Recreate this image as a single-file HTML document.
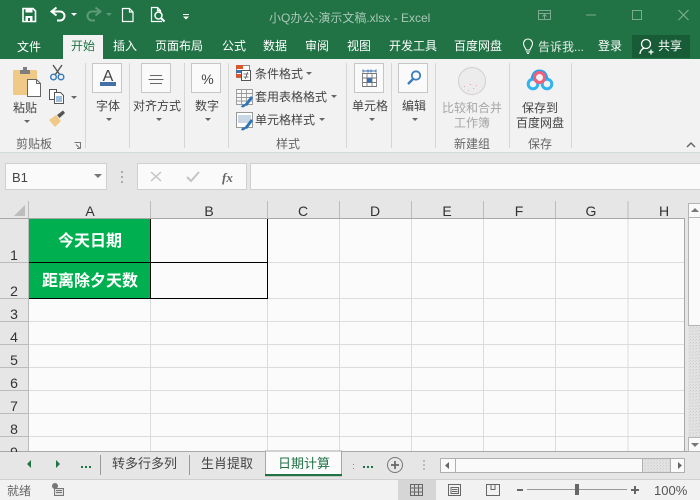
<!DOCTYPE html>
<html><head><meta charset="utf-8"><style>
html,body{margin:0;padding:0;width:700px;height:500px;overflow:hidden;background:#f2f2f2}
svg{display:block}
text{font-family:"Liberation Sans","Noto Sans CJK SC",sans-serif;font-size:12px;fill:#444}
.tab{fill:#fff}
.m{text-anchor:middle}
.g{fill:#666}
.d{fill:#a6a6a6}
.hd{font-size:14px;fill:#333;text-anchor:middle}
.rw{font-size:14px;fill:#333;text-anchor:middle}
</style></head><body>
<svg width="700" height="500" viewBox="0 0 700 500" xmlns="http://www.w3.org/2000/svg">
<defs>
<pattern id="h" width="3" height="3" patternUnits="userSpaceOnUse"><rect width="3" height="3" fill="#e2e2e2"/><rect width="1" height="1" fill="#cfcfcf"/><rect x="2" y="1" width="1" height="1" fill="#d4d4d4"/></pattern>
</defs>
<!-- title bar -->
<rect width="700" height="59" fill="#217346"/>
<path d="M23 8.500h10l2.500 2.500v10.500h-12.500z" fill="none" stroke="#fff" stroke-width="1.600"/>
<rect x="25.500" y="8" width="7" height="4.500" fill="#fff"/>
<rect x="25.500" y="16" width="7" height="5.500" fill="#fff"/><rect x="28" y="18" width="2" height="3" fill="#217346"/>
<path d="M52 11.500h8a4.500 4.500 0 0 1 0 9h-3" fill="none" stroke="#fff" stroke-width="2"/>
<path d="M56.500 7.500l-5 4 5 4" fill="none" stroke="#fff" stroke-width="2"/>
<path d="M71 13h6l-3 3z" fill="#fff"/>
<path d="M100 11.500h-8a4.500 4.500 0 0 0 0 9h3" fill="none" stroke="#5c9a78" stroke-width="2"/>
<path d="M95.500 7.500l5 4-5 4" fill="none" stroke="#5c9a78" stroke-width="2"/>
<path d="M106 13h6l-3 3z" fill="#5c9a78"/>
<path d="M122.500 8.500h7l3.500 3.500v9.500h-10.500zM129.500 8.500v3.500h3.500" fill="none" stroke="#fff" stroke-width="1.200"/>
<path d="M162 21.500h-10.500v-14h6l3 3v3M157.500 7.500v3h3" fill="none" stroke="#fff" stroke-width="1.200"/>
<circle cx="158.500" cy="15.500" r="3.500" fill="none" stroke="#fff" stroke-width="1.500"/>
<path d="M161 18l3.500 3.500" stroke="#fff" stroke-width="2"/>
<path d="M183 14h6v1h-6zM183 16.500h6l-3 3z" fill="#fff"/>
<text x="269" y="22" style="fill:#a9c8b6">小Q办公-演示文稿.xlsx - Excel</text>
<g fill="none" stroke="#7dab91" stroke-width="1">
<path d="M538.500 10.500h12v9h-12zM538.500 13.500h12M544.500 19v-4M542.500 16.500l2-2 2 2"/>
<path d="M586 15h10M632.500 10.500h9v9h-9z"/>
<path d="M678.500 10l10 10M688.500 10l-10 10" stroke-width="1.200"/>
</g>
<!-- tabs -->
<rect x="63" y="35" width="40" height="24" fill="#f2f2f2"/>
<rect x="632" y="35" width="58" height="23" fill="#185c37"/>
<text x="17" y="51" class="tab">文件</text>
<text x="71" y="50" style="fill:#217346">开始</text>
<text x="113" y="50" class="tab">插入</text>
<text x="155" y="50" class="tab">页面布局</text>
<text x="222" y="50" class="tab">公式</text>
<text x="263" y="50" class="tab">数据</text>
<text x="305" y="50" class="tab">审阅</text>
<text x="347" y="50" class="tab">视图</text>
<text x="389" y="50" class="tab">开发工具</text>
<text x="454" y="50" class="tab">百度网盘</text>
<text x="538" y="51" class="tab" style="fill:#e0ebe4">告诉我...</text>
<text x="598" y="50" class="tab">登录</text>
<text x="658" y="50" class="tab">共享</text>
<path d="M526 50c0-2-2.500-3-2.500-6.500a4.500 4.500 0 0 1 9 0c0 3.500-2.500 4.500-2.500 6.500zM526 52h4M527 53.500h2" fill="none" stroke="#fff" stroke-width="1.100"/>
<circle cx="646" cy="44" r="4.500" fill="none" stroke="#fff" stroke-width="1.300"/>
<path d="M640 54c0-3 2-5 4-6M651 49.500v5M648.500 52h5" fill="none" stroke="#fff" stroke-width="1.300"/>
<!-- ribbon -->
<rect y="59" width="700" height="93" fill="#f2f2f2"/>
<rect y="152" width="700" height="1" fill="#d4dcd8"/>
<rect y="153" width="700" height="48" fill="#e6e6e6"/>
<g fill="#d3d8d6">
<rect x="85" y="63" width="1" height="85"/><rect x="129" y="63" width="1" height="85"/><rect x="184" y="63" width="1" height="85"/><rect x="228" y="63" width="1" height="85"/><rect x="346" y="63" width="1" height="85"/><rect x="391" y="63" width="1" height="85"/><rect x="435" y="63" width="1" height="85"/><rect x="509" y="63" width="1" height="85"/><rect x="571" y="63" width="1" height="85"/>
</g>
<!-- clipboard -->
<rect x="13" y="70" width="24" height="25" rx="1" fill="#f0c987"/>
<rect x="20" y="70" width="10" height="4" fill="#7e7e7e"/><rect x="23" y="67" width="4" height="3" fill="#7e7e7e"/>
<path d="M27.500 79.500h9l4 4v13h-13z" fill="#fff" stroke="#666"/>
<path d="M36.500 79.500v4h4" fill="none" stroke="#666"/>
<text x="13" y="112">粘贴</text>
<path d="M24 120h6l-3 3z" fill="#666"/>
<path d="M53 65l7 10M62 65l-7 10" stroke="#555" stroke-width="1.400"/>
<circle cx="53.500" cy="77" r="2.800" fill="none" stroke="#3b7dbd" stroke-width="1.500"/>
<circle cx="61" cy="77" r="2.800" fill="none" stroke="#3b7dbd" stroke-width="1.500"/>
<path d="M49.500 89.500h7v10h-7z" fill="#fff" stroke="#555"/>
<path d="M54.500 92.500h6l3 3v8h-9z" fill="#fff" stroke="#555"/>
<path d="M56 97h6M56 99h6M56 101h6" stroke="#3b7dbd"/>
<path d="M71 96h6l-3 3z" fill="#666"/>
<path d="M49 120l7-5 5 6-6 6z" fill="#f0c987"/>
<path d="M57 115l2.500 3 5.500-5-2-2.500z" fill="#555"/>
<text x="16" y="148" class="g">剪贴板</text>
<path d="M74.500 142.500h6v6M76 144.500l4 4M77 148.500h3.500" fill="none" stroke="#777" stroke-width="1"/>
<!-- font -->
<rect x="92.500" y="63.500" width="29" height="29" fill="#fafafa" stroke="#c6c6c6"/>
<text x="108" y="81" class="m" style="font-size:16px;fill:#444">A</text>
<rect x="100" y="82" width="16" height="4" fill="#4472a8"/>
<text x="96" y="110">字体</text>
<path d="M106 118h6l-3 3z" fill="#666"/>
<!-- align -->
<rect x="141.500" y="63.500" width="29" height="29" fill="#fafafa" stroke="#c6c6c6"/>
<path d="M150 75.500h12M148.500 79.500h15M150 83.500h12" stroke="#666" stroke-width="1"/>
<text x="133" y="110">对齐方式</text>
<path d="M156 118h6l-3 3z" fill="#666"/>
<!-- number -->
<rect x="191.500" y="63.500" width="29" height="29" fill="#fafafa" stroke="#c6c6c6"/>
<text x="207.500" y="84" class="m" style="font-size:14px;fill:#444">%</text>
<text x="195" y="110">数字</text>
<path d="M205 118h6l-3 3z" fill="#666"/>
<!-- styles -->
<rect x="236.500" y="65.500" width="13" height="12" fill="#fff" stroke="#888"/>
<rect x="236" y="65" width="7" height="4" fill="#d9572b"/><rect x="236" y="70" width="5" height="3" fill="#4472a8"/><rect x="236" y="74" width="5" height="3.500" fill="#d9572b"/>
<rect x="241.500" y="70.500" width="9" height="10" fill="#fff" stroke="#555"/>
<path d="M243.500 74h5M243.500 77h5M247.500 72l-2 7" stroke="#555" stroke-width=".8"/>
<text x="255" y="78">条件格式</text><path d="M306 72h6l-3 3z" fill="#666"/>
<path d="M236.500 89.500h16v15h-16zM236.500 93.500h16M236.500 97.500h16M236.500 101h16M241.500 89.500v15M246.500 89.500v15" fill="#f7f7f7" stroke="#999" stroke-width=".9"/>
<path d="M244 105l7-9 2 2-6 8z" fill="#2e75b6"/><path d="M241 107c1-3 3-3 5-2-1 2-3 3-5 2z" fill="#2e75b6"/>
<text x="255" y="101">套用表格格式</text><path d="M331 95h6l-3 3z" fill="#666"/>
<path d="M236.500 112.500h16v15h-16z" fill="#fff" stroke="#999"/>
<rect x="238" y="115" width="13" height="8" fill="#c9d6e3"/>
<path d="M244 128l7-9 2 2-6 8z" fill="#2e75b6"/><path d="M241 130c1-3 3-3 5-2-1 2-3 3-5 2z" fill="#2e75b6"/>
<text x="255" y="124">单元格样式</text><path d="M319 118h6l-3 3z" fill="#666"/>
<text x="276" y="148" class="g">样式</text>
<!-- cells -->
<rect x="354.500" y="63.500" width="29" height="29" fill="#fafafa" stroke="#c6c6c6"/>
<path d="M362.500 73.500h14v13h-14zM362.500 78h14M362.500 82.500h14M367 73.500v13M372 73.500v13" fill="#fff" stroke="#777" stroke-width=".9"/>
<rect x="367" y="78" width="5" height="4.500" fill="#3b6fb0"/>
<path d="M362.500 71h14M363 69.500v3M376 69.500v3M368 69.500v3M371 69.500v3" stroke="#3b6fb0" stroke-width="1"/>
<text x="352" y="110">单元格</text>
<path d="M369 118h6l-3 3z" fill="#666"/>
<!-- edit -->
<rect x="398.500" y="63.500" width="29" height="29" fill="#fafafa" stroke="#c6c6c6"/>
<circle cx="416" cy="75.500" r="4.200" fill="none" stroke="#3b7dbd" stroke-width="1.800"/>
<path d="M413 79l-5 5" stroke="#3b7dbd" stroke-width="2.400"/>
<text x="402" y="110">编辑</text>
<path d="M412 118h6l-3 3z" fill="#666"/>
<!-- compare -->
<circle cx="472" cy="81" r="13.500" fill="#ececec" stroke="#cfcfcf"/>
<g fill="#e7a3b5"><rect x="464" y="86" width="1" height="1"/><rect x="470" y="84" width="1" height="1"/><rect x="473" y="88" width="1" height="1"/><rect x="476" y="85" width="1" height="1"/><rect x="468" y="90" width="1" height="1"/></g>
<text x="442" y="112" class="d">比较和合并</text>
<text x="454" y="127" class="d">工作簿</text>
<text x="454" y="148" class="g">新建组</text>
<!-- baidu -->
<circle cx="533" cy="84" r="4.800" fill="none" stroke="#2fb4ef" stroke-width="3"/>
<circle cx="547" cy="84" r="4.800" fill="none" stroke="#2fb4ef" stroke-width="3"/>
<path d="M532 79c1-6 4-8 7.500-8s6.500 2 7.500 8" fill="none" stroke="#2f9fe6" stroke-width="3"/>
<circle cx="539.500" cy="77.500" r="5" fill="none" stroke="#f0607a" stroke-width="3"/>
<text x="522" y="112">保存到</text>
<text x="516" y="127">百度网盘</text>
<text x="528" y="148" class="g">保存</text>
<path d="M687 147l4-4 4 4" fill="none" stroke="#666" stroke-width="1.500"/>
<!-- formula bar -->
<rect x="5.500" y="163.500" width="101" height="26" fill="#fafafa" stroke="#cfcfcf"/>
<text x="12" y="182" style="font-size:13px;fill:#444">B1</text>
<path d="M94 174h8l-4 4z" fill="#777"/>
<g fill="#aaa"><rect x="121" y="171" width="2" height="2"/><rect x="121" y="176" width="2" height="2"/><rect x="121" y="181" width="2" height="2"/></g>
<rect x="137.500" y="163.500" width="109" height="26" fill="#fafafa" stroke="#cfcfcf"/>
<path d="M151 172l10 9M161 172l-10 9" stroke="#c4c4c4" stroke-width="1.500"/>
<path d="M187 177l4 4 8-9" fill="none" stroke="#c4c4c4" stroke-width="2"/>
<text x="222" y="182" style="font:italic bold 13px 'Liberation Serif',serif;fill:#666">fx</text>
<rect x="250.500" y="163.500" width="450" height="26" fill="#fafafa" stroke="#cfcfcf"/>
<!-- sheet -->
<rect x="0" y="201" width="700" height="18" fill="#e6e6e6"/>
<rect x="0" y="219" width="28" height="232" fill="#e6e6e6"/>
<rect x="29" y="219" width="656" height="232" fill="#fbfbfb"/>
<path d="M25 205v11h-11z" fill="#bdbdbd"/>
<g stroke="#dcdcdc" stroke-width="1">
<path d="M150.500 219v232M267.500 219v232M339.500 219v232M411.500 219v232M483.500 219v232M555.500 219v232M628 219v232"/>
<path d="M29 262.500h656M29 298.500h656M29 321.500h656M29 344.500h656M29 367.500h656M29 390.500h656M29 413.500h656M29 436.500h656"/>
</g>
<g stroke="#bcbcbc" stroke-width="1">
<path d="M28.500 201v250M150.500 201v18M267.500 201v18M339.500 201v18M411.500 201v18M483.500 201v18M555.500 201v18M628 201v18"/>
<path d="M0 262.500h28M0 298.500h28M0 321.500h28M0 344.500h28M0 367.500h28M0 390.500h28M0 413.500h28M0 436.500h28"/>
</g>
<path d="M0 218.500h685M684.500 219v232" stroke="#a8a8a8" stroke-width="1"/>
<path d="M0 451.500h700" stroke="#a8a8a8"/>
<text x="90" y="216" class="hd">A</text>
<text x="209" y="216" class="hd">B</text>
<text x="303" y="216" class="hd">C</text>
<text x="375" y="216" class="hd">D</text>
<text x="447" y="216" class="hd">E</text>
<text x="519" y="216" class="hd">F</text>
<text x="591" y="216" class="hd">G</text>
<text x="664" y="216" class="hd">H</text>
<text x="14" y="260" class="rw">1</text>
<text x="14" y="296" class="rw">2</text>
<text x="14" y="319" class="rw">3</text>
<text x="14" y="342" class="rw">4</text>
<text x="14" y="365" class="rw">5</text>
<text x="14" y="388" class="rw">6</text>
<text x="14" y="411" class="rw">7</text>
<text x="14" y="434" class="rw">8</text>
<text x="14" y="457" class="rw">9</text>
<rect x="29" y="219" width="121" height="79" fill="#00b050"/>
<text x="90" y="246" class="m" style="font-size:16px;font-weight:700;fill:#fff">今天日期</text>
<text x="90" y="286" class="m" style="font-size:16px;font-weight:700;fill:#fff">距离除夕天数</text>
<path d="M29 262.500h239M29 298.500h239M150.500 219v80M267.500 219v80" stroke="#000" stroke-width="1" fill="none"/>
<!-- vertical scroll -->
<rect x="685" y="201" width="15" height="250" fill="#e6e6e6"/>
<rect x="688" y="203" width="12" height="248" fill="url(#h)"/>
<rect x="688.500" y="203.500" width="12" height="14" fill="#fafafa" stroke="#b5b5b5"/>
<path d="M691 212h8l-4-4z" fill="#777"/>
<rect x="688.500" y="217.500" width="12" height="108" fill="#fafafa" stroke="#b5b5b5"/>
<rect x="688.500" y="437.500" width="12" height="14" fill="#fafafa" stroke="#b5b5b5"/>
<path d="M691 443h8l-4 4z" fill="#777"/>
<!-- sheet tabs bar -->
<rect y="452" width="700" height="27" fill="#e6e6e6"/>
<path d="M0 479.500h700" stroke="#d0d0d0"/>
<path d="M31 460v8l-4-4zM56 460v8l4-4z" fill="#217346"/>
<rect x="81" y="466" width="2" height="2" fill="#217346"/><rect x="85" y="466" width="2" height="2" fill="#217346"/><rect x="89" y="466" width="2" height="2" fill="#217346"/>
<rect x="100" y="455" width="1" height="20" fill="#999"/>
<text x="112" y="468" style="font-size:13px;fill:#444">转多行多列</text>
<rect x="189" y="455" width="1" height="20" fill="#999"/>
<text x="201" y="468" style="font-size:13px;fill:#444">生肖提取</text>
<path d="M265.500 476v-25h76v25z" fill="#fbfbfb" stroke="#a8a8a8"/>
<rect x="265" y="474" width="77" height="2" fill="#217346"/>
<text x="278" y="468" style="font-size:13px;fill:#217346">日期计算</text>
<rect x="353" y="464" width="1" height="1" fill="#c08040"/><rect x="353" y="468" width="1" height="1" fill="#c08040"/>
<rect x="363" y="466" width="2" height="2" fill="#217346"/><rect x="367" y="466" width="2" height="2" fill="#217346"/><rect x="371" y="466" width="2" height="2" fill="#217346"/>
<circle cx="395" cy="465" r="7.500" fill="none" stroke="#777" stroke-width="1"/>
<path d="M391 465h8M395 461v8" stroke="#666" stroke-width="1.700"/>
<g fill="#bbb"><rect x="423" y="460" width="2" height="2"/><rect x="423" y="464" width="2" height="2"/><rect x="423" y="468" width="2" height="2"/></g>
<rect x="440.500" y="458.500" width="244" height="14" fill="url(#h)" stroke="#b0b0b0"/>
<rect x="440.500" y="458.500" width="15" height="14" fill="#fafafa" stroke="#b0b0b0"/>
<rect x="455.500" y="458.500" width="187" height="14" fill="#fafafa" stroke="#b0b0b0"/>
<rect x="670.500" y="458.500" width="14" height="14" fill="#fafafa" stroke="#b0b0b0"/>
<path d="M449 462v7l-4-3.500zM678 462v7l4-3.500z" fill="#666"/>
<!-- status bar -->
<rect y="480" width="700" height="20" fill="#f2f2f2"/>
<text x="7" y="495" class="g">就绪</text>
<path d="M54.500 488.500h9v7h-9z" fill="#ddd" stroke="#777" stroke-width="1"/>
<path d="M56 490.500h6M56 492.500h6" stroke="#777"/>
<circle cx="55" cy="486" r="3" fill="#777"/>
<rect x="398" y="480" width="38" height="20" fill="#d6d6d6"/>
<path d="M410.500 484.500h12v11h-12zM410.500 488h12M410.500 492h12M414.500 484.500v11M418.500 484.500v11" fill="none" stroke="#666"/>
<path d="M448.500 484.500h12v11h-12zM451 487.500h7.500v6h-7.500zM452 489.500h5.500M452 491.500h5.500" fill="none" stroke="#666"/>
<path d="M486.500 484.500h13v11h-13zM491 484.500v5h4v-5" fill="none" stroke="#666"/>
<rect x="517" y="489" width="6" height="2" fill="#666"/>
<rect x="527" y="489" width="100" height="1" fill="#999"/>
<rect x="575" y="484" width="4" height="11" fill="#666"/>
<path d="M631 490h8M635 486v8" stroke="#666" stroke-width="2"/>
<text x="654" y="495" style="font-size:13px;fill:#555">100%</text>
</svg>
</body></html>
